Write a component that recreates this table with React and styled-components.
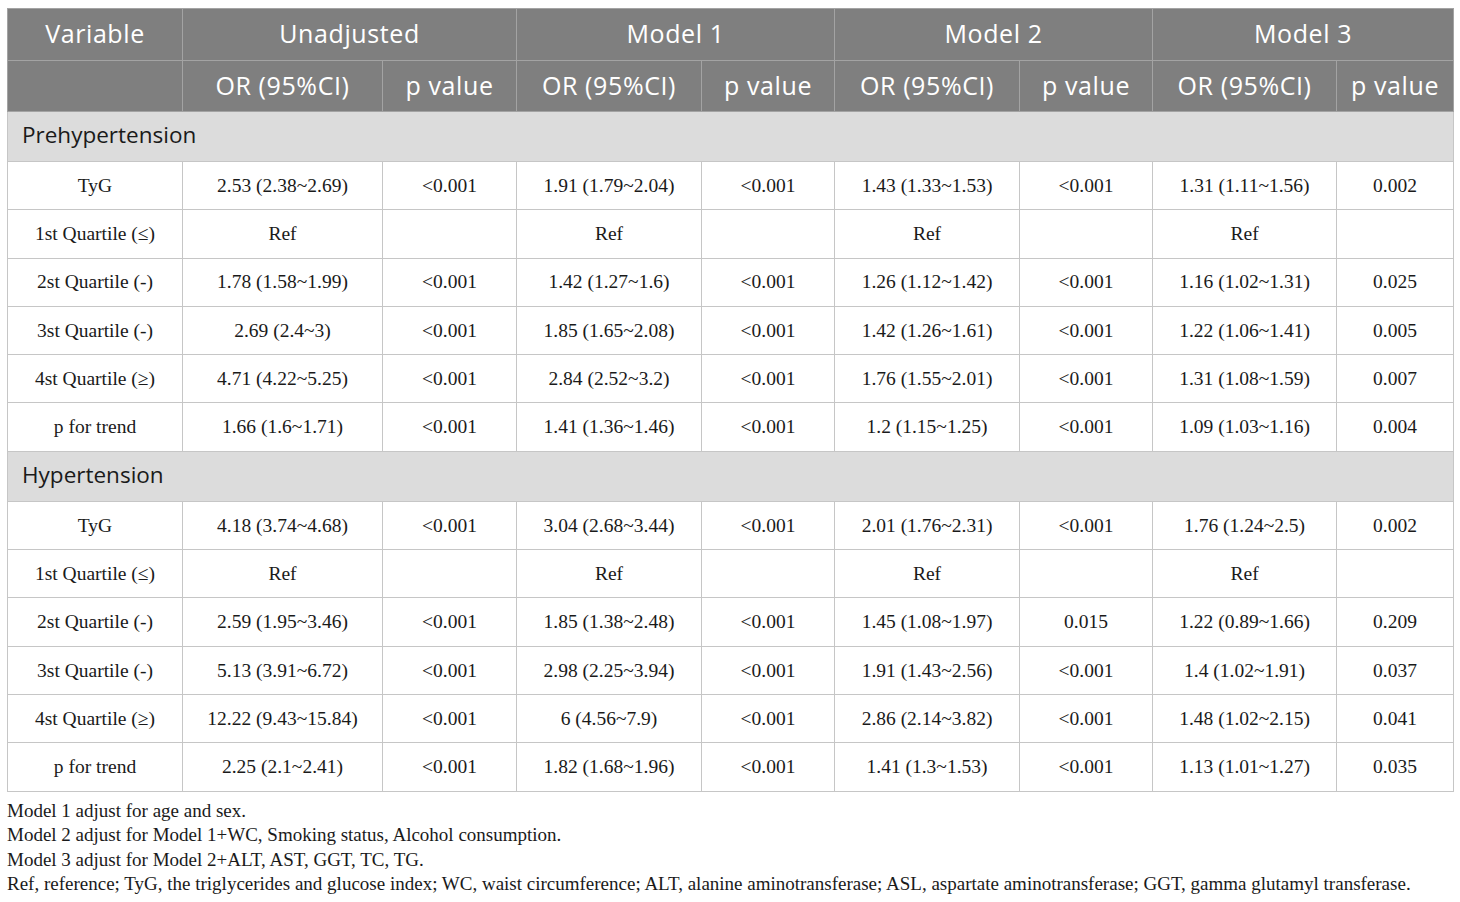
import React from "react";
import styled, { createGlobalStyle } from "styled-components";

const Global = createGlobalStyle`
  html, body { margin: 0; padding: 0; background: #fff; }
  body { font-family: "Liberation Serif", "Times New Roman", serif; color: #1a1a1a; }
`;

const Page = styled.div`
  padding: 8px 8px 0 7px;
`;

const Table = styled.table`
  width: 1446px;
  border-collapse: collapse;
  table-layout: fixed;
`;

const HeadCell = styled.th`
  background: #7f7f7f;
  color: #fff;
  font-family: "Open Sans", "Noto Sans", sans-serif;
  font-weight: 400;
  font-size: 25px;
  line-height: 1;
  letter-spacing: 0.6px;
  text-align: center;
  vertical-align: middle;
  border: 1px solid #a3a3a3;
  padding: 0 0 2px;
  height: ${(p) => p.$h}px;
`;

const SectionCell = styled.td`
  background: #dcdcdc;
  color: #1a1a1a;
  font-family: "Open Sans", "Noto Sans", sans-serif;
  font-size: 22.5px;
  line-height: 1;
  text-align: left;
  padding: 0 0 2px 14px;
  height: 47px;
  border: 1px solid #c6c6c6;
`;

const Cell = styled.td`
  font-family: "Liberation Serif", "Times New Roman", serif;
  font-size: 19.5px;
  line-height: 1;
  text-align: center;
  vertical-align: middle;
  border: 1px solid #c6c6c6;
  padding: 0;
  height: 47.3px;
  color: #1a1a1a;
`;

const Notes = styled.div`
  font-family: "Liberation Serif", "Times New Roman", serif;
  font-size: 19px;
  line-height: 24.6px;
  color: #1a1a1a;
  padding-top: 7px;
`;

const widths = [175, 200, 134, 185, 133, 185, 133, 184, 117];

const sections = [
  {
    title: "Prehypertension",
    rows: [
      ["TyG", "2.53 (2.38~2.69)", "<0.001", "1.91 (1.79~2.04)", "<0.001", "1.43 (1.33~1.53)", "<0.001", "1.31 (1.11~1.56)", "0.002"],
      ["1st Quartile (≤)", "Ref", "", "Ref", "", "Ref", "", "Ref", ""],
      ["2st Quartile (-)", "1.78 (1.58~1.99)", "<0.001", "1.42 (1.27~1.6)", "<0.001", "1.26 (1.12~1.42)", "<0.001", "1.16 (1.02~1.31)", "0.025"],
      ["3st Quartile (-)", "2.69 (2.4~3)", "<0.001", "1.85 (1.65~2.08)", "<0.001", "1.42 (1.26~1.61)", "<0.001", "1.22 (1.06~1.41)", "0.005"],
      ["4st Quartile (≥)", "4.71 (4.22~5.25)", "<0.001", "2.84 (2.52~3.2)", "<0.001", "1.76 (1.55~2.01)", "<0.001", "1.31 (1.08~1.59)", "0.007"],
      ["p for trend", "1.66 (1.6~1.71)", "<0.001", "1.41 (1.36~1.46)", "<0.001", "1.2 (1.15~1.25)", "<0.001", "1.09 (1.03~1.16)", "0.004"],
    ],
  },
  {
    title: "Hypertension",
    rows: [
      ["TyG", "4.18 (3.74~4.68)", "<0.001", "3.04 (2.68~3.44)", "<0.001", "2.01 (1.76~2.31)", "<0.001", "1.76 (1.24~2.5)", "0.002"],
      ["1st Quartile (≤)", "Ref", "", "Ref", "", "Ref", "", "Ref", ""],
      ["2st Quartile (-)", "2.59 (1.95~3.46)", "<0.001", "1.85 (1.38~2.48)", "<0.001", "1.45 (1.08~1.97)", "0.015", "1.22 (0.89~1.66)", "0.209"],
      ["3st Quartile (-)", "5.13 (3.91~6.72)", "<0.001", "2.98 (2.25~3.94)", "<0.001", "1.91 (1.43~2.56)", "<0.001", "1.4 (1.02~1.91)", "0.037"],
      ["4st Quartile (≥)", "12.22 (9.43~15.84)", "<0.001", "6 (4.56~7.9)", "<0.001", "2.86 (2.14~3.82)", "<0.001", "1.48 (1.02~2.15)", "0.041"],
      ["p for trend", "2.25 (2.1~2.41)", "<0.001", "1.82 (1.68~1.96)", "<0.001", "1.41 (1.3~1.53)", "<0.001", "1.13 (1.01~1.27)", "0.035"],
    ],
  },
];

const notes = [
  "Model 1 adjust for age and sex.",
  "Model 2 adjust for Model 1+WC, Smoking status, Alcohol consumption.",
  "Model 3 adjust for Model 2+ALT, AST, GGT, TC, TG.",
  "Ref, reference; TyG, the triglycerides and glucose index; WC, waist circumference; ALT, alanine aminotransferase; ASL, aspartate aminotransferase; GGT, gamma glutamyl transferase.",
];

export default function App() {
  return (
    <Page>
      <Global />
      <Table>
        <colgroup>
          {widths.map((w, i) => (
            <col key={i} style={{ width: w }} />
          ))}
        </colgroup>
        <thead>
          <tr>
            <HeadCell $h={49}>Variable</HeadCell>
            <HeadCell $h={49} colSpan={2}>Unadjusted</HeadCell>
            <HeadCell $h={49} colSpan={2}>Model 1</HeadCell>
            <HeadCell $h={49} colSpan={2}>Model 2</HeadCell>
            <HeadCell $h={49} colSpan={2}>Model 3</HeadCell>
          </tr>
          <tr>
            <HeadCell $h={48} style={{ borderTopColor: "#7f7f7f" }}></HeadCell>
            {["Unadjusted", "Model 1", "Model 2", "Model 3"].map((m) => (
              <React.Fragment key={m}>
                <HeadCell $h={48}>OR (95%CI)</HeadCell>
                <HeadCell $h={48}>p value</HeadCell>
              </React.Fragment>
            ))}
          </tr>
        </thead>
        <tbody>
          {sections.map((s) => (
            <React.Fragment key={s.title}>
              <tr>
                <SectionCell colSpan={9}>{s.title}</SectionCell>
              </tr>
              {s.rows.map((r, i) => (
                <tr key={i}>
                  {r.map((c, j) => (
                    <Cell key={j}>{c}</Cell>
                  ))}
                </tr>
              ))}
            </React.Fragment>
          ))}
        </tbody>
      </Table>
      <Notes>
        {notes.map((n) => (
          <div key={n}>{n}</div>
        ))}
      </Notes>
    </Page>
  );
}
